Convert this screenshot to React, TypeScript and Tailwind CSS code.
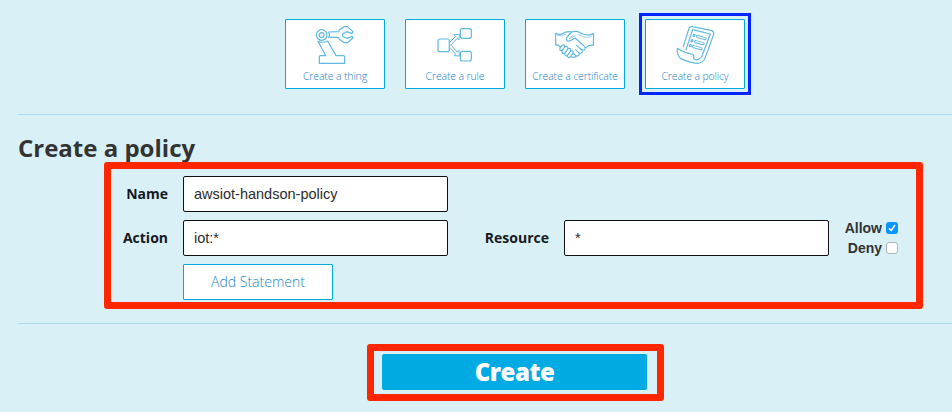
import type { ReactNode } from "react";

const openSans = "font-['Open_Sans','Noto_Sans',sans-serif]";
const helvetica = "font-['Liberation_Sans',Arial,sans-serif]";

function Icon({ viewBox, children }: { viewBox: string; children: ReactNode }) {
  return (
    <svg
      className="h-[50px] w-[98px] shrink-0 text-[#5fb9e2]"
      viewBox={viewBox}
      fill="none"
      stroke="currentColor"
      strokeWidth="3.6"
      strokeLinejoin="round"
      strokeLinecap="round"
      aria-hidden="true"
    >
      {children}
    </svg>
  );
}

function RobotArm() {
  return (
    <Icon viewBox="18 30 294 150">
      <circle cx="125" cy="75" r="16" />
      <circle cx="125" cy="75" r="7" />
      <path d="M146 66 L176 65 L178 60 L192 50 L202 50 L219 65 L216 70 L200 65 L188 71 L188 79 L200 85 L217 79 L219 84 L202 98 L192 98 L178 88 L176 82 L146 82 C149 77 149 71 146 66 Z" />
      <path d="M114 94 L137 137 L122 137 Q118 137 118 141 L118 160 L194 160 L194 141 Q194 137 190 137 L168 137 L143 93 Q129 100 114 94 Z" />
    </Icon>
  );
}

function RuleFlow() {
  return (
    <Icon viewBox="18 30 294 150">
      <rect x="114" y="87" width="34" height="38" rx="6" />
      <rect x="181" y="56" width="33" height="29" rx="6" />
      <rect x="181" y="124" width="33" height="29" rx="6" />
      <path
        d="M149 97 L167 79 L162 74 L178 73 L177 90 L172 85 L152 105 L172 126 L177 121 L178 138 L162 137 L167 132 L149 114"
        strokeWidth="3"
      />
    </Icon>
  );
}

function Handshake() {
  return (
    <Icon viewBox="24 30 294 150">
      <path d="M113 70 Q125 77 137 69 Q149 63 161 66 L146 83 Q143 94 155 93 L171 84 Q181 92 199 109 Q205 115 199 119 Q194 122 187 116 L176 106" />
      <path d="M161 66 Q173 61 187 68 Q207 80 227 71 L226 106 Q214 103 203 113" />
      <path d="M113 70 L113 105 Q120 103 127 111" />
      <path d="M127 113 L132 106 Q139 102 141 110 Q149 106 150 116 Q159 113 158 123 Q167 121 165 130 L157 141 Q150 146 148 137 Q140 139 140 130 Q131 132 132 122 Q122 122 127 113 Z" />
      <path d="M132 122 L141 110 M140 130 L150 116 M148 137 L158 123" />
      <path d="M187 116 L193 122 Q194 131 184 130 L173 119 M184 130 Q184 139 175 138 L165 130 M175 138 Q168 145 160 140" />
      <path d="M119 77 Q130 81 143 72 M181 73 Q203 87 220 79 M166 74 L153 87 L171 77" strokeWidth="2" />
    </Icon>
  );
}

function PolicyScroll() {
  return (
    <Icon viewBox="33 30 294 150">
      <path d="M145 110 L162 55 Q165 48 173 50 L230 62 Q238 65 236 73 L211 142 Q205 159 188 160 Q166 159 136 145 Q125 134 127 115 Q149 129 169 132 Q179 134 176 145 Q183 153 192 147 Q201 142 203 133 L226 72 L173 59 L153 119" />
      <path
        d="M187 79 L210 86 M182 95 L204 101 M176 110 L198 116"
        strokeWidth="9.5"
      />
      <path
        d="M187 79 L210 86 M182 95 L204 101 M176 110 L198 116"
        strokeWidth="3.5"
        stroke="white"
      />
      <circle cx="177" cy="76" r="3" />
      <circle cx="171" cy="92" r="3" />
      <circle cx="166" cy="107" r="3" />
    </Icon>
  );
}

function Tile({ label, children }: { label: string; children: ReactNode }) {
  return (
    <button
      type="button"
      className={`${openSans} flex h-[70px] w-[100px] flex-col items-center overflow-hidden rounded-[1px] border border-[#00a9e0] bg-white text-[10.5px] font-light leading-[13px] tracking-[-0.14px] text-[#1c7fc6]`}
    >
      {children}
      <span className="whitespace-nowrap">{label}</span>
    </button>
  );
}

function Field({ label, value }: { label: string; value: string }) {
  return (
    <label className="flex h-9 items-center">
      <span
        className={`${openSans} mr-[15px] w-[66px] pb-0.5 text-right text-[14px] font-bold text-[#16191f]`}
      >
        {label}
      </span>
      <input
        type="text"
        defaultValue={value}
        className={`${helvetica} h-9 w-[265px] rounded-[2px] border border-[#111] bg-white px-[10px] text-[14.5px] text-[#2b2b2b] outline-none`}
      />
    </label>
  );
}

function Choice({ label, checked = false }: { label: string; checked?: boolean }) {
  return (
    <div
      role="checkbox"
      aria-checked={checked}
      className={`${helvetica} flex h-5 items-center justify-end gap-1 text-[14px] font-bold text-[#333]`}
    >
      <span>{label}</span>
      <span
        className={
          checked
            ? "flex size-3 items-center justify-center rounded-[3px] bg-[#0895ff]"
            : "size-3 rounded-[3px] border border-[#b3b3b3] bg-white"
        }
      >
        {checked && (
          <svg className="size-3" viewBox="0 0 12 12" fill="none" stroke="white" strokeWidth="1.6">
            <path d="M3 6.3 L5.2 8.6 L9 3" />
          </svg>
        )}
      </span>
    </div>
  );
}

export default function App() {
  return (
    <main className="h-[412px] w-[952px] overflow-hidden bg-[#d8f0f6]">
      <nav className="flex h-[114px] gap-5 pl-[285px] pt-[19px]">
        <Tile label="Create a thing">
          <RobotArm />
        </Tile>
        <Tile label="Create a rule">
          <RuleFlow />
        </Tile>
        <Tile label="Create a certificate">
          <Handshake />
        </Tile>
        <div className="relative h-[70px]">
          <Tile label="Create a policy">
            <PolicyScroll />
          </Tile>
          <span className="pointer-events-none absolute -inset-x-1.5 -inset-y-1.5 border-3 border-[#0026ff]" />
        </div>
      </nav>

      <section className="relative ml-[18px] h-[210px] border-y border-[#a9dbf1]">
        <h1
          className={`${openSans} h-[61px] pt-4 text-[24px] font-bold leading-[33px] text-[#333]`}
        >
          Create a policy
        </h1>
        <div className="flex flex-col gap-2 pl-[84px]">
          <Field label="Name" value="awsiot-handson-policy" />
          <div className="flex h-9">
            <Field label="Action" value="iot:*" />
            <div className="ml-[35px]">
              <Field label="Resource" value="*" />
            </div>
            <div className="-mt-0.5 ml-[9px] w-[60px]">
              <Choice label="Allow" checked />
              <Choice label="Deny" />
            </div>
          </div>
          <button
            type="button"
            className={`${openSans} ml-[81px] h-9 w-[150px] rounded-[1px] border border-[#00a9e0] bg-white pb-0.5 text-[14px] font-light text-[#1c86cc]`}
          >
            Add Statement
          </button>
        </div>
        <span className="pointer-events-none absolute left-[86px] top-[47px] h-[147px] w-[819px] rounded-[3px] border-7 border-[#ff2600]" />
      </section>

      <footer className="pl-[367px] pt-5">
        <div className="flex h-[57px] w-[297px] rounded-[3px] border-7 border-[#ff2600] pl-2 pt-[3px]">
          <button
            type="button"
            className={`${openSans} h-9 w-[265px] rounded-[2px] bg-[#00abe4] text-[24px] font-extrabold leading-9 tracking-[-0.5px] text-white`}
          >
            Create
          </button>
        </div>
      </footer>
    </main>
  );
}
